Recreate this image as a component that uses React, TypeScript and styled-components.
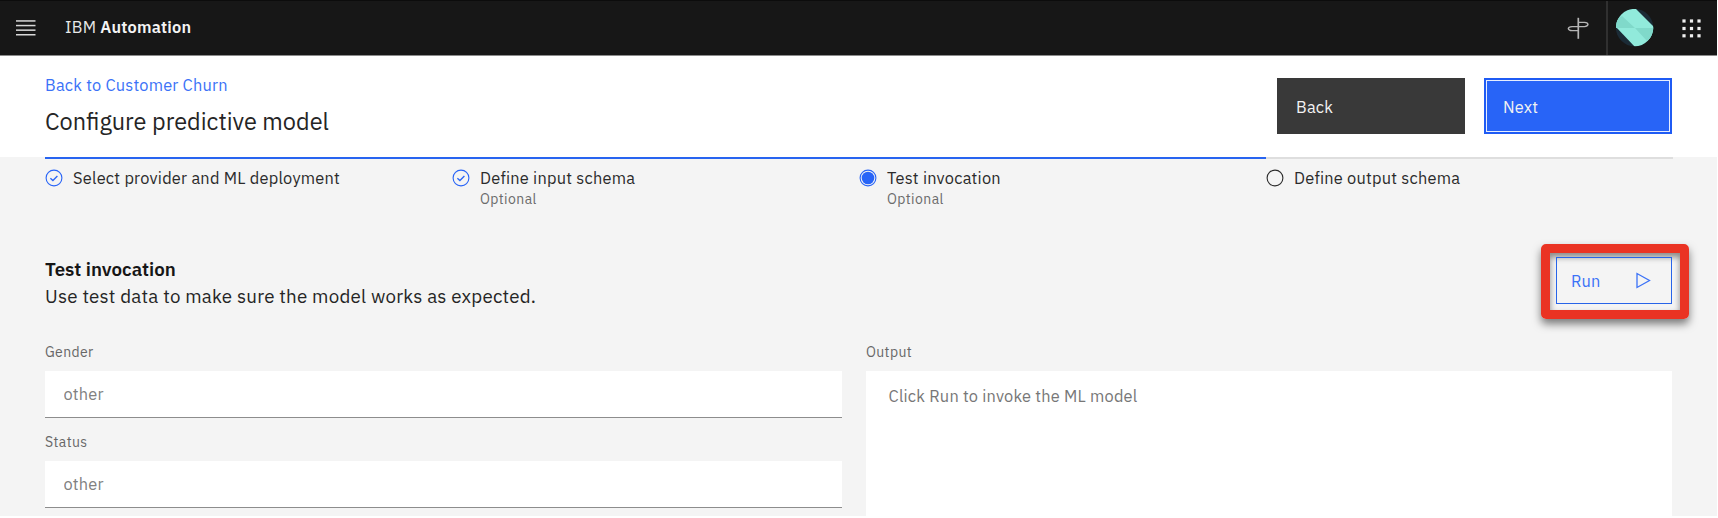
import React from 'react';
import styled, { createGlobalStyle } from 'styled-components';

const GlobalStyle = createGlobalStyle`
  *, *::before, *::after { box-sizing: border-box; }
  html, body { margin: 0; padding: 0; }
  body { background: #fff; color: #161616; overflow: hidden; font-family: "IBM Plex Sans", Roboto, "Liberation Sans", sans-serif; }
  button, input, textarea { font: inherit; }
`;

const Page = styled.div`
  width: 1717px;
  height: 516px;
  overflow: hidden;
  background: #f4f4f4;
`;

const Header = styled.header`
  height: 56px;
  display: flex;
  align-items: center;
  background: #171717;
  border-top: 1px solid #0c0c0c;
  border-bottom: 1px solid #8b8b8b;
`;

const MenuButton = styled.button`
  display: flex;
  margin: 0 29px 0 16px;
  padding: 0;
  border: 0;
  background: none;
`;

const Brand = styled.div`
  flex: 1;
  padding-bottom: 2px;
  font-size: 16.4px;
  line-height: 20px;
  letter-spacing: 0.2px;
  color: #e8e8e8;
  b { font-weight: 600; color: #f4f4f4; }
`;

const HeaderTools = styled.div`
  height: 54px;
  display: flex;
  align-items: center;
`;

const HeaderTool = styled.div<{ $width: number; $divided?: boolean; $inset?: number }>`
  width: ${(p) => p.$width}px;
  height: 54px;
  display: flex;
  align-items: center;
  justify-content: center;
  padding-left: ${(p) => p.$inset ?? 0}px;
  ${(p) => p.$divided && 'border-left: 2px solid #303030;'}
`;

const TitleBar = styled.section`
  height: 101px;
  display: flex;
  justify-content: space-between;
  padding: 22px 45px 0;
  background: #fff;
`;

const Titles = styled.div`
  display: flex;
  flex-direction: column;
  align-items: flex-start;
`;

const BackLink = styled.a`
  margin-top: -3px;
  font-size: 16.4px;
  line-height: 20px;
  letter-spacing: 0.19px;
  color: #3b72f7;
  text-decoration: none;
`;

const PageTitle = styled.h1`
  margin: 11px 0 0;
  font-size: 23.5px;
  line-height: 30px;
  font-weight: 400;
  color: #252525;
`;

const Actions = styled.div`
  display: flex;
  gap: 19px;
`;

const ActionButton = styled.button<{ $primary?: boolean }>`
  width: 188px;
  height: 56px;
  padding: 1px 0 0 ${(p) => (p.$primary ? 17 : 19)}px;
  border: ${(p) => (p.$primary ? '2px solid #1f5bf4' : '0')};
  box-shadow: ${(p) => (p.$primary ? 'inset 0 0 0 1px #e6edff' : 'none')};
  background: ${(p) => (p.$primary ? '#2864f7' : '#393939')};
  color: #f2f2f2;
  text-align: left;
  font-size: 16.4px;
  letter-spacing: 0.19px;
`;

const Steps = styled.ol`
  display: grid;
  grid-template-columns: repeat(4, 1fr);
  height: 91px;
  margin: 0 44px 0 45px;
  padding: 0;
  list-style: none;
`;

const Step = styled.li<{ $reached: boolean }>`
  display: flex;
  gap: 10px;
  border-top: 2px solid ${(p) => (p.$reached ? '#2864f0' : '#dedede')};
`;

const StepIcon = styled.svg`
  flex: none;
  margin-top: 10px;
`;

const StepLabel = styled.div`
  margin-top: 9px;
  font-size: 16.4px;
  line-height: 20px;
  letter-spacing: 0.22px;
  color: #2b2b2b;
`;

const StepNote = styled.div`
  margin-top: 2px;
  font-size: 14px;
  line-height: 18px;
  letter-spacing: 0.42px;
  color: #6b6b6b;
`;

const Intro = styled.section`
  height: 96px;
  display: flex;
  justify-content: space-between;
  padding: 8px 45px 0;
`;

const IntroTitle = styled.h2`
  margin: 0;
  font-size: 18.75px;
  line-height: 27px;
  font-weight: 600;
`;

const IntroText = styled.p`
  margin: 0;
  font-size: 18.75px;
  line-height: 27px;
  letter-spacing: 0.21px;
  color: #252525;
`;

const Highlight = styled.div`
  width: 148px;
  height: 75px;
  margin: -12px -17px 0 0;
  padding: 4px 8px 6px 6px;
  border: 9px solid #ea3323;
  border-radius: 5px;
  box-shadow: 0 5px 9px rgba(0, 0, 0, 0.5), inset 0 4px 6px rgba(0, 0, 0, 0.45);
`;

const RunButton = styled.button`
  width: 116px;
  height: 47px;
  display: flex;
  align-items: center;
  justify-content: space-between;
  padding: 0 20px 0 14px;
  border: 1px solid #2864e8;
  background: transparent;
  color: #3b72f7;
  font-size: 16.4px;
  letter-spacing: 0.1px;
`;

const Form = styled.section`
  display: grid;
  grid-template-columns: 797px 1fr;
  gap: 24px;
  padding: 0 45px;
`;

const Column = styled.div`
  display: flex;
  flex-direction: column;
`;

const FieldLabel = styled.label`
  height: 27px;
  font-size: 14px;
  line-height: 17px;
  letter-spacing: 0.38px;
  color: #676767;
`;

const Field = styled.input`
  height: 47px;
  margin-bottom: 16px;
  padding: 0 18.5px;
  border: 0;
  border-bottom: 1px solid #8d8d8d;
  border-radius: 0;
  background: #fff;
  font-size: 16.4px;
  letter-spacing: 0.19px;
  &::placeholder { color: #808080; opacity: 1; }
`;

const OutputBox = styled.div`
  height: 200px;
  padding: 15px 22.5px;
  background: #fff;
  font-size: 16.4px;
  letter-spacing: 0.2px;
  line-height: 20px;
  color: #777;
`;

type StepState = 'done' | 'current' | 'todo';

const steps: { label: string; note?: string; state: StepState }[] = [
  { label: 'Select provider and ML deployment', state: 'done' },
  { label: 'Define input schema', note: 'Optional', state: 'done' },
  { label: 'Test invocation', note: 'Optional', state: 'current' },
  { label: 'Define output schema', state: 'todo' },
];

function StateIcon({ state }: { state: StepState }) {
  const stroke = state === 'todo' ? '#2b2b2b' : '#2864f7';
  return (
    <StepIcon width="18" height="18" viewBox="0 0 18 18" fill="none">
      <circle cx="9" cy="9" r="7.9" stroke={stroke} strokeWidth="1.1" />
      {state === 'done' && <path d="M5.4 9.2 7.9 11.5 12.4 7" stroke={stroke} strokeWidth="1.3" />}
      {state === 'current' && <circle cx="9" cy="9" r="6.3" fill={stroke} />}
    </StepIcon>
  );
}

export default function App() {
  return (
    <>
      <GlobalStyle />
      <Page>
        <Header>
          <MenuButton aria-label="Menu">
            <svg width="20" height="16" viewBox="0 0 20 16" fill="#d8d8d8">
              {[0.2, 4.8, 9.4, 14].map((y) => <rect key={y} y={y} width="19.5" height="1.5" />)}
            </svg>
          </MenuButton>
          <Brand>IBM <b>Automation</b></Brand>
          <HeaderTools>
            <HeaderTool $width={56}>
              <svg width="22" height="22" viewBox="0 0 22 22" fill="none" stroke="#b5b5b5" strokeWidth="1.3" strokeLinejoin="round">
                <path d="M11.3 0.8V21.8" strokeWidth="1.7" />
                <path d="M11.3 5.4H17.5Q21 5.6 21 7.5Q20.5 9.3 17.5 9.6H5Q1.5 10 1.3 11.6Q1.6 13.5 5 13.7H11.3" />
              </svg>
            </HeaderTool>
            <HeaderTool $width={56} $divided>
              <svg width="38" height="38" viewBox="0 0 38 38">
                <clipPath id="avatar"><circle cx="18.6" cy="18.6" r="18.7" /></clipPath>
                <g clipPath="url(#avatar)">
                  <rect width="38" height="38" fill="#1b2b36" />
                  <path d="M0 18V0H20L38 18V38H19Z" fill="#91eadb" />
                  <path d="M19 19L0 19V10L6 7ZM19 19H38V26L31 32Z" fill="#80d9ca" />
                </g>
              </svg>
            </HeaderTool>
            <HeaderTool $width={55} $inset={3}>
              <svg width="19" height="19" viewBox="0 0 19 19" fill="#f0f0f0">
                {[0.4, 7.9, 15.2].map((y) => [0.4, 7.9, 15.4].map((x) => <rect key={`${x}-${y}`} x={x} y={y} width="3.2" height="3.2" />))}
              </svg>
            </HeaderTool>
          </HeaderTools>
        </Header>
        <TitleBar>
          <Titles>
            <BackLink>Back to Customer Churn</BackLink>
            <PageTitle>Configure predictive model</PageTitle>
          </Titles>
          <Actions>
            <ActionButton>Back</ActionButton>
            <ActionButton $primary>Next</ActionButton>
          </Actions>
        </TitleBar>
        <Steps>
          {steps.map((s) => (
            <Step key={s.label} $reached={s.state !== 'todo'}>
              <StateIcon state={s.state} />
              <div>
                <StepLabel>{s.label}</StepLabel>
                {s.note && <StepNote>{s.note}</StepNote>}
              </div>
            </Step>
          ))}
        </Steps>
        <Intro>
          <div>
            <IntroTitle>Test invocation</IntroTitle>
            <IntroText>Use test data to make sure the model works as expected.</IntroText>
          </div>
          <Highlight>
            <RunButton>
              Run
              <svg width="15" height="17" viewBox="0 0 15 17" fill="none" stroke="#3b72f7" strokeWidth="1.3">
                <path d="M1 1.5V15.5L13.5 8.5Z" />
              </svg>
            </RunButton>
          </Highlight>
        </Intro>
        <Form>
          <Column>
            <FieldLabel htmlFor="gender">Gender</FieldLabel>
            <Field id="gender" placeholder="other" />
            <FieldLabel htmlFor="status">Status</FieldLabel>
            <Field id="status" placeholder="other" />
          </Column>
          <Column>
            <FieldLabel as="div">Output</FieldLabel>
            <OutputBox>Click Run to invoke the ML model</OutputBox>
          </Column>
        </Form>
      </Page>
    </>
  );
}
